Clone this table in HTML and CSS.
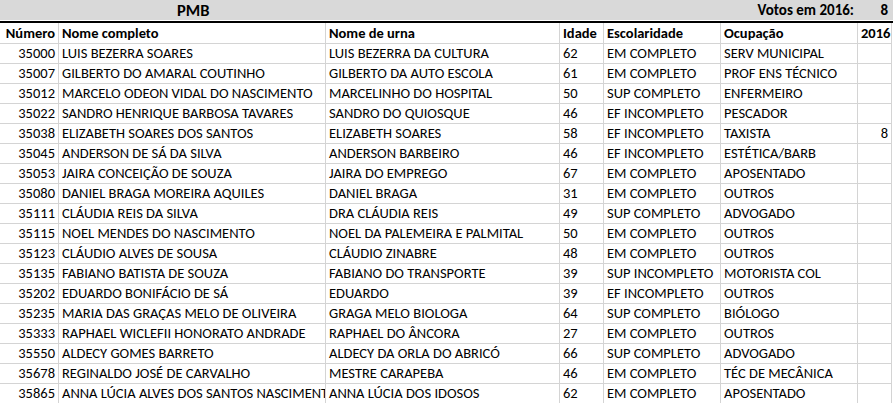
FILE: index.html
```html
<!DOCTYPE html>
<html lang="pt">
<head>
<meta charset="utf-8">
<link rel="stylesheet" href="styles.css">
</head>
<body>
<div class="sheet">
  <div class="title-row">
    <div class="title">PMB</div>
    <div class="votes-label">Votos em 2016:</div>
    <div class="votes-value">8</div>
  </div>
  <div class="grid">
    <div class="c h num">Número</div><div class="c h">Nome completo</div><div class="c h">Nome de urna</div><div class="c h">Idade</div><div class="c h">Escolaridade</div><div class="c h">Ocupação</div><div class="c h num">2016</div>

    <div class="c num">35000</div><div class="c">LUIS BEZERRA SOARES</div><div class="c">LUIS BEZERRA DA CULTURA</div><div class="c">62</div><div class="c">EM COMPLETO</div><div class="c">SERV MUNICIPAL</div><div class="c num"></div>
    <div class="c num">35007</div><div class="c">GILBERTO DO AMARAL COUTINHO</div><div class="c">GILBERTO DA AUTO ESCOLA</div><div class="c">61</div><div class="c">EM COMPLETO</div><div class="c">PROF ENS TÉCNICO</div><div class="c num"></div>
    <div class="c num">35012</div><div class="c">MARCELO ODEON VIDAL DO NASCIMENTO</div><div class="c">MARCELINHO DO HOSPITAL</div><div class="c">50</div><div class="c">SUP COMPLETO</div><div class="c">ENFERMEIRO</div><div class="c num"></div>
    <div class="c num">35022</div><div class="c">SANDRO HENRIQUE BARBOSA TAVARES</div><div class="c">SANDRO DO QUIOSQUE</div><div class="c">46</div><div class="c">EF INCOMPLETO</div><div class="c">PESCADOR</div><div class="c num"></div>
    <div class="c num">35038</div><div class="c">ELIZABETH SOARES DOS SANTOS</div><div class="c">ELIZABETH SOARES</div><div class="c">58</div><div class="c">EF INCOMPLETO</div><div class="c">TAXISTA</div><div class="c num">8</div>
    <div class="c num">35045</div><div class="c">ANDERSON DE SÁ DA SILVA</div><div class="c">ANDERSON BARBEIRO</div><div class="c">46</div><div class="c">EF INCOMPLETO</div><div class="c">ESTÉTICA/BARB</div><div class="c num"></div>
    <div class="c num">35053</div><div class="c">JAIRA CONCEIÇÃO DE SOUZA</div><div class="c">JAIRA DO EMPREGO</div><div class="c">67</div><div class="c">EM COMPLETO</div><div class="c">APOSENTADO</div><div class="c num"></div>
    <div class="c num">35080</div><div class="c">DANIEL BRAGA MOREIRA AQUILES</div><div class="c">DANIEL BRAGA</div><div class="c">31</div><div class="c">EM COMPLETO</div><div class="c">OUTROS</div><div class="c num"></div>
    <div class="c num">35111</div><div class="c">CLÁUDIA REIS DA SILVA</div><div class="c">DRA CLÁUDIA REIS</div><div class="c">49</div><div class="c">SUP COMPLETO</div><div class="c">ADVOGADO</div><div class="c num"></div>
    <div class="c num">35115</div><div class="c">NOEL MENDES DO NASCIMENTO</div><div class="c">NOEL DA PALEMEIRA E PALMITAL</div><div class="c">50</div><div class="c">EM COMPLETO</div><div class="c">OUTROS</div><div class="c num"></div>
    <div class="c num">35123</div><div class="c">CLÁUDIO ALVES DE SOUSA</div><div class="c">CLÁUDIO ZINABRE</div><div class="c">48</div><div class="c">EM COMPLETO</div><div class="c">OUTROS</div><div class="c num"></div>
    <div class="c num">35135</div><div class="c">FABIANO BATISTA DE SOUZA</div><div class="c">FABIANO DO TRANSPORTE</div><div class="c">39</div><div class="c">SUP INCOMPLETO</div><div class="c">MOTORISTA COL</div><div class="c num"></div>
    <div class="c num">35202</div><div class="c">EDUARDO BONIFÁCIO DE SÁ</div><div class="c">EDUARDO</div><div class="c">39</div><div class="c">EF INCOMPLETO</div><div class="c">OUTROS</div><div class="c num"></div>
    <div class="c num">35235</div><div class="c">MARIA DAS GRAÇAS MELO DE OLIVEIRA</div><div class="c">GRAGA MELO BIOLOGA</div><div class="c">64</div><div class="c">SUP COMPLETO</div><div class="c">BIÓLOGO</div><div class="c num"></div>
    <div class="c num">35333</div><div class="c">RAPHAEL WICLEFII HONORATO ANDRADE</div><div class="c">RAPHAEL DO ÂNCORA</div><div class="c">27</div><div class="c">EM COMPLETO</div><div class="c">OUTROS</div><div class="c num"></div>
    <div class="c num">35550</div><div class="c">ALDECY GOMES BARRETO</div><div class="c">ALDECY DA ORLA DO ABRICÓ</div><div class="c">66</div><div class="c">SUP COMPLETO</div><div class="c">ADVOGADO</div><div class="c num"></div>
    <div class="c num">35678</div><div class="c">REGINALDO JOSÉ DE CARVALHO</div><div class="c">MESTRE CARAPEBA</div><div class="c">46</div><div class="c">EM COMPLETO</div><div class="c">TÉC DE MECÂNICA</div><div class="c num"></div>
    <div class="c num">35865</div><div class="c">ANNA LÚCIA ALVES DOS SANTOS NASCIMENTO</div><div class="c">ANNA LÚCIA DOS IDOSOS</div><div class="c">62</div><div class="c">EM COMPLETO</div><div class="c">APOSENTADO</div><div class="c num"></div>
  </div>
</div>
</body>
</html>
```
FILE: styles.css
```css
html, body {
  margin: 0;
  padding: 0;
  background: #ffffff;
}
body {
  font-family: "Carlito", "Lato", "Liberation Sans", sans-serif;
  font-size: 14.5px;
  color: #000000;
  overflow: hidden;
}
.sheet {
  width: 893px;
}
.title-row {
  display: grid;
  grid-template-columns: 720px 137px 34px;
  height: 21px;
  background: #d9d9d9;
  border-bottom: 2px solid #000000;
  box-sizing: content-box;
  font-weight: bold;
  line-height: 20px;
  box-shadow: inset 0 -1px 0 #ffffff;
}
.title {
  padding-left: 177px;
  font-size: 16.5px;
}
.votes-label {
  text-align: right;
  padding-right: 3px;
  font-size: 15px;
}
.votes-value {
  text-align: right;
  padding-right: 3px;
  font-size: 15px;
}
.grid {
  display: grid;
  grid-template-columns: 59px 267px 234px 44px 117px 137px 34px;
  grid-template-rows: 21px;
  grid-auto-rows: 20px;
}
.c {
  box-sizing: border-box;
  border-right: 1px solid #d4d4d4;
  border-bottom: 1px solid #d4d4d4;
  padding: 0 3px;
  line-height: 19px;
  white-space: nowrap;
  overflow: hidden;
}
.h {
  font-weight: bold;
  height: 21px;
  line-height: 20px;
}
.num {
  text-align: right;
}
```
